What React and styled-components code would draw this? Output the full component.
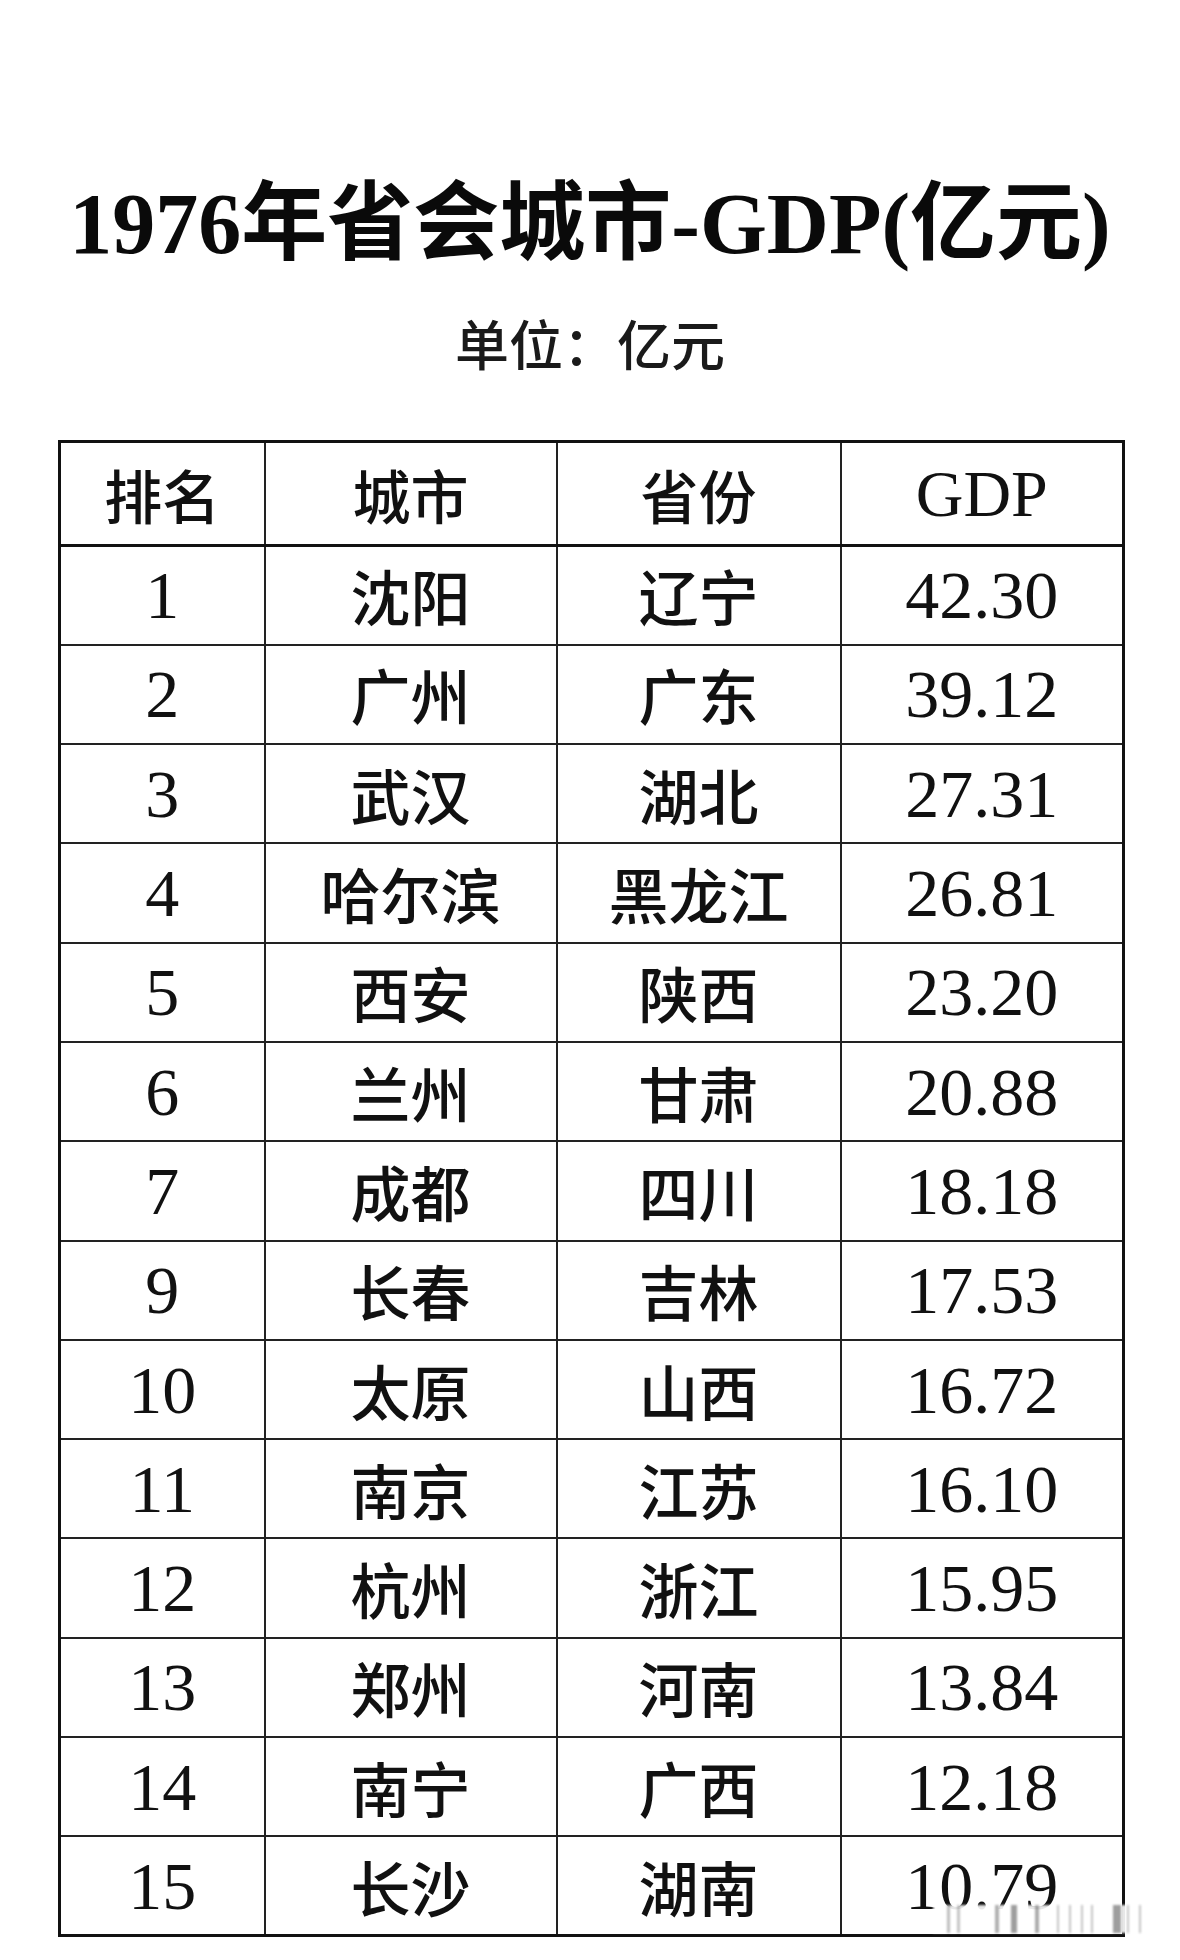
import React from "react";
import styled, { createGlobalStyle } from "styled-components";

const Global = createGlobalStyle`
  html, body { margin: 0; padding: 0; background: #ffffff; }
  body { font-family: "Liberation Serif", "Noto Sans CJK SC", serif; color: #111; }
`;

const Page = styled.div`
  width: 1180px;
  min-height: 1960px;
  box-sizing: border-box;
  padding-top: 174px;
  display: flex;
  flex-direction: column;
  align-items: center;
`;

const Title = styled.h1`
  margin: 0;
  font-family: "Liberation Serif", "Noto Sans CJK SC", serif;
  font-weight: 700;
  font-size: 86px;
  line-height: 100px;
  color: #0a0a0a;
  letter-spacing: 0;
`;

const Subtitle = styled.div`
  margin-top: 37px;
  font-family: "Noto Sans CJK SC", sans-serif;
  font-size: 54px;
  font-weight: 500;
  line-height: 64px;
  color: #1a1a1a;
`;

const TableWrap = styled.div`
  position: relative;
  margin-top: 65px;
  margin-left: 3px;
`;

const Table = styled.table`
  border-collapse: collapse;
  width: 1064px;
  table-layout: fixed;
  border: 3px solid #111;
`;

const HeadRow = styled.tr`
  height: 104px;
  border-bottom: 3px solid #111;
`;

const Row = styled.tr`
  height: 99.3px;
  border-bottom: 2px solid #222;
`;

const Cell = styled.td`
  padding: 0;
  text-align: center;
  vertical-align: middle;
  border-left: 2px solid #222;
  font-family: ${(p) =>
    p.$num ? `"Liberation Serif", serif` : `"Noto Sans CJK SC", sans-serif`};
  font-size: ${(p) => p.$size}px;
  font-weight: ${(p) => (p.$num ? 400 : 500)};
  line-height: 1;
  color: #111;
  &:first-child { border-left: none; }
`;

const HeadCell = styled(Cell).attrs({ as: "th" })``;

const Watermark = styled.div`
  position: absolute;
  left: 875px;
  top: 1465px;
  width: 215px;
  height: 28px;
  background:
    linear-gradient(90deg,
      transparent 0 14px, rgba(110,110,110,0.45) 14px 17px, transparent 17px 24px,
      rgba(110,110,110,0.4) 24px 27px, transparent 27px 62px,
      rgba(100,100,100,0.5) 62px 66px, transparent 66px 78px,
      rgba(80,80,80,0.55) 78px 84px, transparent 84px 102px,
      rgba(90,90,90,0.5) 102px 106px, transparent 106px 124px,
      rgba(110,110,110,0.4) 124px 126px, transparent 126px 136px,
      rgba(110,110,110,0.4) 136px 138px, transparent 138px 148px,
      rgba(110,110,110,0.4) 148px 150px, transparent 150px 158px,
      rgba(110,110,110,0.4) 158px 160px, transparent 160px 180px,
      rgba(80,80,80,0.55) 180px 188px, transparent 188px 194px,
      rgba(110,110,110,0.4) 194px 196px, transparent 196px 206px,
      rgba(110,110,110,0.4) 206px 208px, transparent 208px),
    rgba(255,255,255,0.9);
  filter: blur(0.8px);
`;

const cols = [205, 292, 284, 283];

const data = [
  ["1", "沈阳", "辽宁", "42.30"],
  ["2", "广州", "广东", "39.12"],
  ["3", "武汉", "湖北", "27.31"],
  ["4", "哈尔滨", "黑龙江", "26.81"],
  ["5", "西安", "陕西", "23.20"],
  ["6", "兰州", "甘肃", "20.88"],
  ["7", "成都", "四川", "18.18"],
  ["9", "长春", "吉林", "17.53"],
  ["10", "太原", "山西", "16.72"],
  ["11", "南京", "江苏", "16.10"],
  ["12", "杭州", "浙江", "15.95"],
  ["13", "郑州", "河南", "13.84"],
  ["14", "南宁", "广西", "12.18"],
  ["15", "长沙", "湖南", "10.79"],
];

export default function App() {
  return (
    <>
      <Global />
      <Page>
        <Title>1976年省会城市-GDP(亿元)</Title>
        <Subtitle>单位：亿元</Subtitle>
        <TableWrap>
          <Table>
            <colgroup>
              {cols.map((w, i) => (
                <col key={i} style={{ width: w }} />
              ))}
            </colgroup>
            <thead>
              <HeadRow>
                <HeadCell $size={58}>排名</HeadCell>
                <HeadCell $size={58}>城市</HeadCell>
                <HeadCell $size={58}>省份</HeadCell>
                <HeadCell $num $size={66}>GDP</HeadCell>
              </HeadRow>
            </thead>
            <tbody>
              {data.map((r) => (
                <Row key={r[0]}>
                  <Cell $num $size={68}>{r[0]}</Cell>
                  <Cell $size={60}>{r[1]}</Cell>
                  <Cell $size={60}>{r[2]}</Cell>
                  <Cell $num $size={68}>{r[3]}</Cell>
                </Row>
              ))}
            </tbody>
          </Table>
          <Watermark />
        </TableWrap>
      </Page>
    </>
  );
}
